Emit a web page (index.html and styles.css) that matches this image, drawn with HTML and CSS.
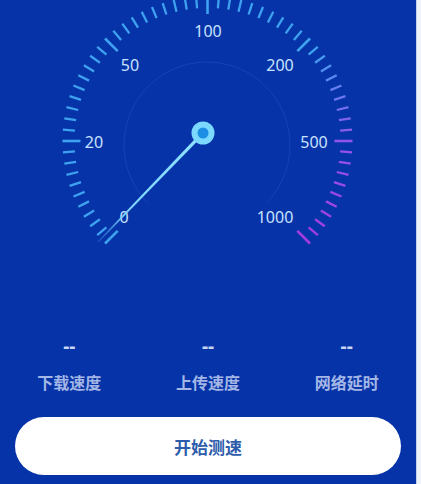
FILE: index.html
```html
<!DOCTYPE html>
<html lang="zh-CN">
<head>
    <meta charset="UTF-8">
    <meta name="viewport" content="width=device-width, initial-scale=1.0">
    <title>网络测速</title>
    <link rel="stylesheet" href="styles.css">
</head>
<body>

<div class="screen">
    <div class="gauge">
        <svg id="dial" width="417" height="262" viewBox="0 0 417 262">
            <defs>
                <linearGradient id="needleGrad" x1="203" y1="133" x2="98" y2="242" gradientUnits="userSpaceOnUse">
                    <stop offset="0" stop-color="#8fe2ff"/>
                    <stop offset="0.75" stop-color="#7fd4ff"/>
                    <stop offset="1" stop-color="#5fb8ff" stop-opacity="0.2"/>
                </linearGradient>
            </defs>
            <path class="inner-ring" d="M 148.3 203.7 A 83 83 0 1 1 265.7 203.7"/>
            <g id="ticks"></g>
            <g class="scale">
                <text x="124" y="217">0</text>
                <text x="94" y="142">20</text>
                <text x="130" y="65">50</text>
                <text x="208" y="31">100</text>
                <text x="280" y="65">200</text>
                <text x="314" y="142">500</text>
                <text x="275" y="217">1000</text>
            </g>
            <polygon points="201.8,131.8 204.2,134.2 98.4,242.4 97.6,241.6" fill="url(#needleGrad)"/>
            <circle cx="203" cy="133" r="11.5" fill="#7bd8ff"/>
            <circle cx="203" cy="133" r="5.5" fill="#1c8fe4"/>
        </svg>
    </div>

    <div class="stats">
        <div class="stat">
            <div class="value">--</div>
            <div class="label">下载速度</div>
        </div>
        <div class="stat">
            <div class="value">--</div>
            <div class="label">上传速度</div>
        </div>
        <div class="stat">
            <div class="value">--</div>
            <div class="label">网络延时</div>
        </div>
    </div>

    <button class="start">开始测速</button>
</div>

<script>
    var cx = 207.5, cy = 141;
    var ticks = document.getElementById('ticks');

    function mix(a, b, t) {
        var r = Math.round(a[0] + (b[0] - a[0]) * t);
        var g = Math.round(a[1] + (b[1] - a[1]) * t);
        var bl = Math.round(a[2] + (b[2] - a[2]) * t);
        return 'rgb(' + r + ',' + g + ',' + bl + ')';
    }

    function tickColor(i) {
        var blue = [62, 162, 240], violet = [146, 84, 234], purple = [166, 60, 222];
        if (i <= 41) return mix(blue, blue, 0);
        if (i <= 50) return mix(blue, violet, (i - 41) / 9);
        return mix(violet, purple, (i - 50) / 10);
    }

    for (var i = 0; i <= 60; i++) {
        var a = (135 + i * 4.5) * Math.PI / 180;
        var major = i % 10 === 0;
        var r1 = major ? 127 : 133, r2 = 145;
        var line = document.createElementNS('http://www.w3.org/2000/svg', 'line');
        line.setAttribute('x1', (cx + r1 * Math.cos(a)).toFixed(1));
        line.setAttribute('y1', (cy + r1 * Math.sin(a)).toFixed(1));
        line.setAttribute('x2', (cx + r2 * Math.cos(a)).toFixed(1));
        line.setAttribute('y2', (cy + r2 * Math.sin(a)).toFixed(1));
        line.setAttribute('stroke', tickColor(i));
        line.setAttribute('stroke-width', major ? 2.6 : 2.3);
        ticks.appendChild(line);
    }
</script>

</body>
</html>
```

FILE: styles.css
```css
body {
    margin: 0;
    background-color: #eef2f9;
    font-family: "Noto Sans", "Noto Sans CJK SC", sans-serif;
}
.screen {
    width: 417px;
    height: 484px;
    background-color: #0634a8;
    border-right: 1px solid #c3cfe6;
    box-sizing: border-box;
    overflow: hidden;
}
.gauge svg {
    display: block;
}
.inner-ring {
    fill: none;
    stroke: rgba(110, 150, 255, 0.15);
    stroke-width: 1;
}
.scale text {
    fill: #c8e2ff;
    font-size: 16px;
    text-anchor: middle;
    dominant-baseline: central;
}
.stats {
    display: grid;
    grid-template-columns: repeat(3, 1fr);
    margin-top: 74px;
}
.stat {
    text-align: center;
}
.value {
    color: #c8d6f4;
    font-size: 19px;
    font-weight: bold;
    line-height: 20px;
}
.label {
    margin-top: 17px;
    color: #a3b6e6;
    font-size: 16px;
    font-weight: bold;
    line-height: 20px;
}
.start {
    display: block;
    width: 386px;
    height: 58px;
    margin: 24px 0 0 15px;
    border: none;
    border-radius: 29px;
    background-color: white;
    color: #2d5cab;
    font-family: "Noto Sans CJK SC", sans-serif;
    font-size: 17px;
    font-weight: bold;
    cursor: pointer;
}
```
